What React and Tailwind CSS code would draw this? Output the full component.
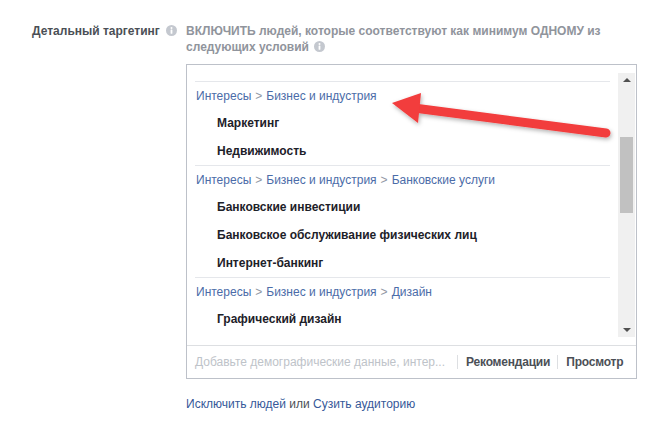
import React from "react";

const font = { fontFamily: '"Liberation Sans", Arial, sans-serif' };

function Info({ className = "" }) {
  return (
    <svg className={"inline-block align-middle " + className} width="11" height="11" viewBox="0 0 11 11">
      <circle cx="5.5" cy="5.5" r="5.5" fill="#c4c8cf" />
      <circle cx="5.5" cy="3" r="1" fill="#fff" />
      <rect x="4.6" y="4.6" width="1.8" height="4.2" rx="0.5" fill="#fff" />
    </svg>
  );
}

function Header({ parts }) {
  return (
    <div className="h-[28px] flex items-center border-t border-[#e5e7eb] pl-[1px] text-[12px] text-[#4b6ca8]">
      {parts.map((p, i) => (
        <React.Fragment key={i}>
          {i > 0 && <span className="text-[#9197a3] mx-[4px]">&gt;</span>}
          <span>{p}</span>
        </React.Fragment>
      ))}
    </div>
  );
}

function Item({ children }) {
  return (
    <div className="h-[28px] flex items-center pl-[22px] text-[12px] font-bold text-[#1d2129]">
      {children}
    </div>
  );
}

export default function App() {
  return (
    <div className="relative w-[648px] h-[435px] bg-white overflow-hidden" style={font}>
      <div className="flex pt-[23px]">
        <div className="w-[186px] pl-[32px] flex items-start">
          <span className="text-[12px] leading-[16px] font-bold text-[#4b4f56]">Детальный таргетинг</span>
          <Info className="ml-[6px] mt-[2px]" />
        </div>
        <div className="flex flex-col">
          <div className="w-[420px] text-[12px] leading-[16px] font-bold text-[#90949c]">
            ВКЛЮЧИТЬ людей, которые соответствуют как минимум ОДНОМУ из следующих условий
            <Info className="ml-[5px] mb-[2px]" />
          </div>
          <div className="mt-[9px] w-[451px] border border-[#bdc1c9] flex flex-col">
            <div className="h-[280px] flex">
              <div className="flex-1 pl-[8px] pt-[16px] overflow-hidden">
                <Header parts={["Интересы", "Бизнес и индустрия"]} />
                <Item>Маркетинг</Item>
                <Item>Недвижимость</Item>
                <Header parts={["Интересы", "Бизнес и индустрия", "Банковские услуги"]} />
                <Item>Банковские инвестиции</Item>
                <Item>Банковское обслуживание физических лиц</Item>
                <Item>Интернет-банкинг</Item>
                <Header parts={["Интересы", "Бизнес и индустрия", "Дизайн"]} />
                <Item>Графический дизайн</Item>
              </div>
              <div className="w-[17px] ml-[8px] mr-[1px] my-[8px] bg-[#f0f0f0] flex flex-col items-center">
                <div className="h-[14px] flex items-center justify-center">
                  <div className="w-0 h-0 border-l-[4px] border-r-[4px] border-b-[4px] border-l-transparent border-r-transparent border-b-[#505050]" />
                </div>
                <div className="mt-[50px] w-[13px] h-[76px] bg-[#c1c1c1]" />
                <div className="flex-1" />
                <div className="h-[14px] flex items-center justify-center">
                  <div className="w-0 h-0 border-l-[4px] border-r-[4px] border-t-[4px] border-l-transparent border-r-transparent border-t-[#505050]" />
                </div>
              </div>
            </div>
            <div className="h-[33px] border-t border-[#dddfe2] flex items-center pl-[8px] text-[12px]">
              <span className="text-[#bec3c9] w-[254px]">Добавьте демографические данные, интер...</span>
              <span className="w-px h-[14px] bg-[#dddfe2] mx-[8px]" />
              <span className="font-bold text-[#4b4f56] tracking-[-0.2px]">Рекомендации</span>
              <span className="w-px h-[14px] bg-[#dddfe2] ml-[7px] mr-[8px]" />
              <span className="font-bold text-[#4b4f56] tracking-[-0.2px]">Просмотр</span>
            </div>
          </div>
          <div className="mt-[17px] text-[12px] leading-[16px]">
            <span className="text-[#365899]">Исключить людей</span>
            <span className="text-[#4b4f56]"> или </span>
            <span className="text-[#365899]">Сузить аудиторию</span>
          </div>
        </div>
      </div>
      <svg className="absolute left-0 top-0 pointer-events-none" width="648" height="435">
        <defs>
          <filter id="sh" x="-10%" y="-50%" width="120%" height="200%">
            <feDropShadow dx="1" dy="2" stdDeviation="2" floodColor="#000" floodOpacity="0.3" />
          </filter>
        </defs>
        <g filter="url(#sh)">
          <line x1="414" y1="108" x2="606" y2="133" stroke="#f23c3c" strokeWidth="9" strokeLinecap="round" />
          <polygon points="392,103 421,93 418,123" fill="#f23c3c" />
        </g>
      </svg>
    </div>
  );
}
